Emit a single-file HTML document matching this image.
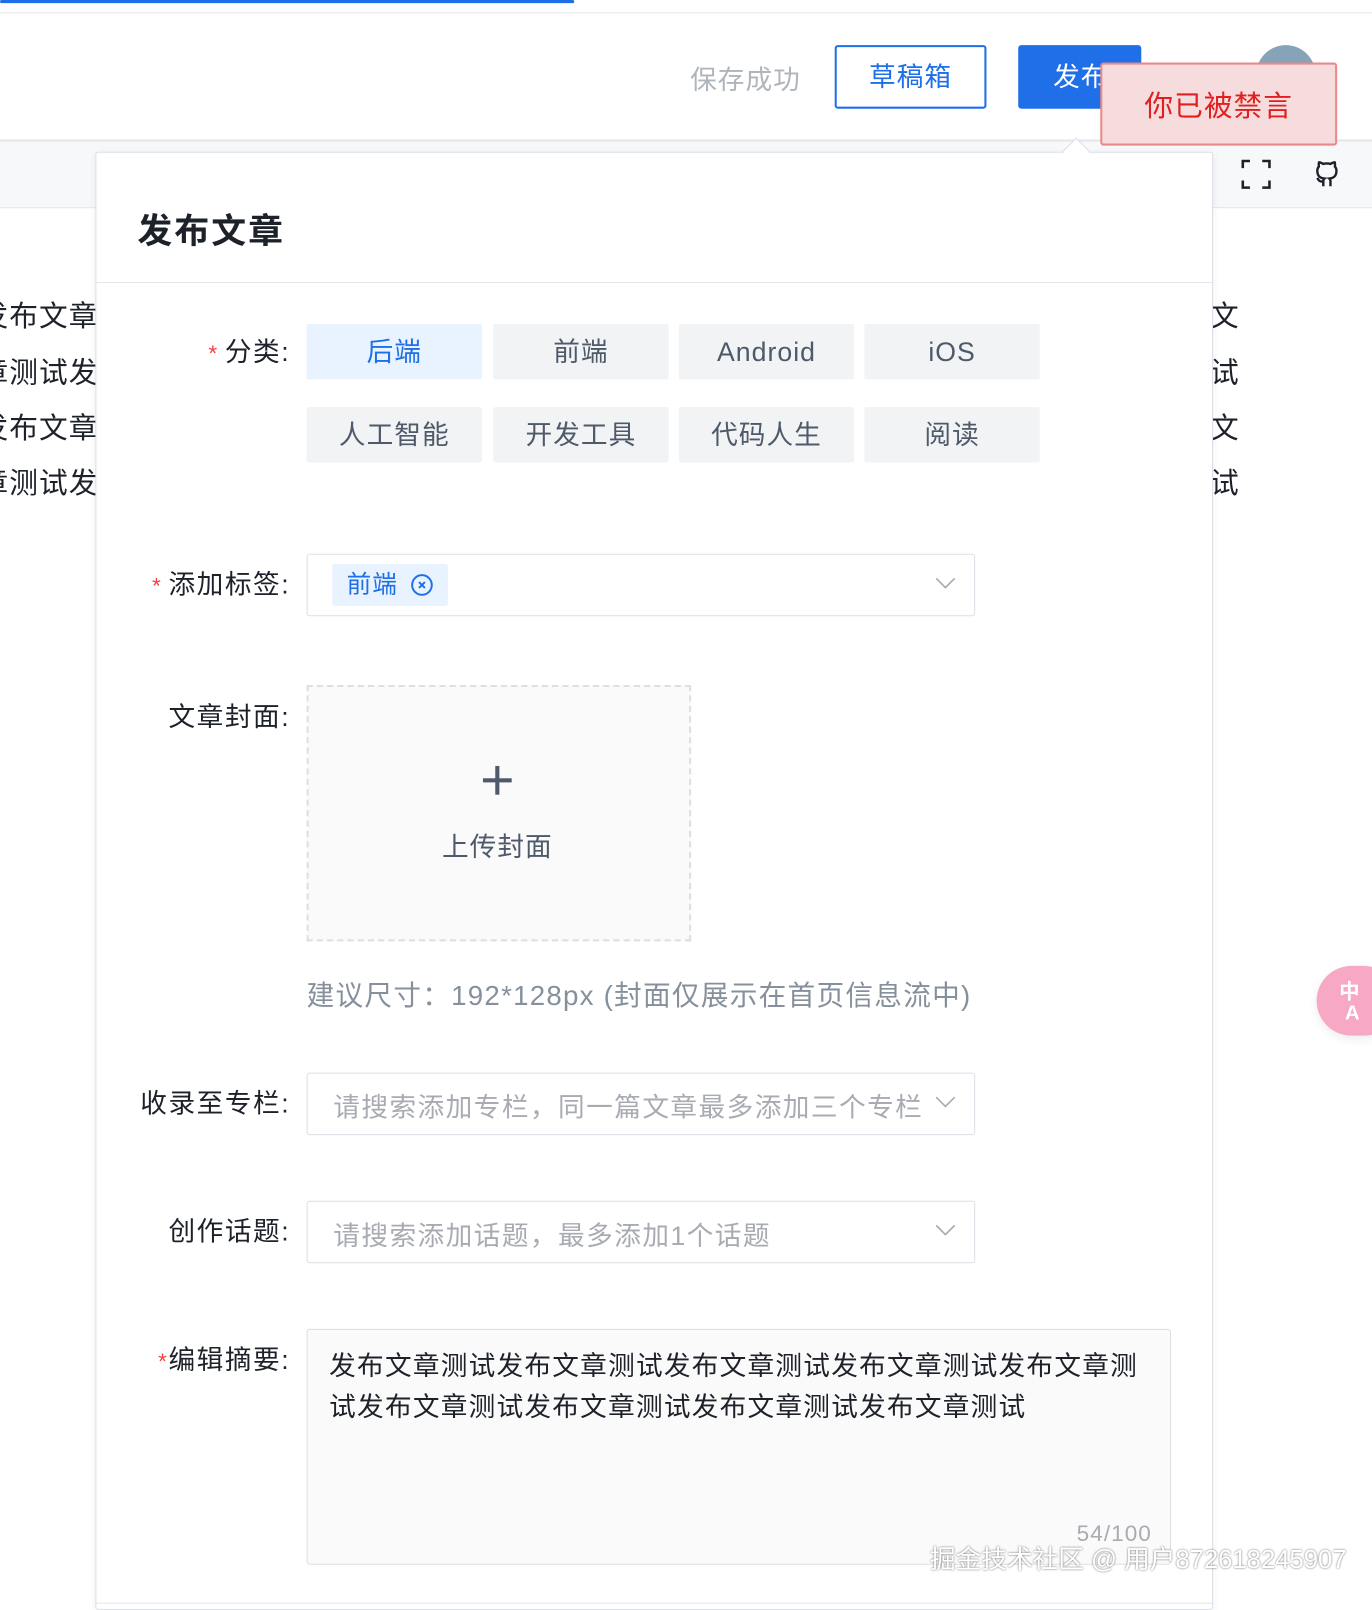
<!DOCTYPE html>
<html><head><meta charset="utf-8"><style>
html,body{margin:0;padding:0;width:1372px;height:1608px;overflow:hidden;background:#fff}
#w{position:absolute;left:0;top:0;width:1338px;height:1568px;transform:scale(1.02541);transform-origin:0 0;font-family:"Liberation Sans","Noto Sans CJK SC",sans-serif;color:#1d2129;letter-spacing:1px}
.a{position:absolute}
.lbl{position:absolute;right:1055px;font-size:26px;color:#1d2129;white-space:nowrap;line-height:30px;letter-spacing:1.5px}
.lbl b{color:#f53f3f;font-weight:normal;font-size:22px;margin-right:6px}
.cat{position:absolute;width:171px;height:54px;background:#f2f3f5;color:#4e5969;font-size:26px;line-height:54px;text-align:center;border-radius:2px}
.sel{position:absolute;left:299px;width:650px;height:59px;border:1px solid #dcdfe6;border-radius:3px;background:#fff}
.ph{position:absolute;left:25px;top:13px;font-size:26px;color:#a8abb2;white-space:nowrap;letter-spacing:1.4px}
.chev{position:absolute;right:18px;top:22px}
.bg{position:absolute;font-size:28px;color:#1d2129;white-space:nowrap}
</style></head><body><div id="w">
<div class="a" style="left:0;top:0;width:560px;height:3px;background:#1e6fe8;border-radius:2px"></div>
<div class="a" style="left:0;top:12px;width:1338px;height:1px;background:#e5e6eb"></div>
<div class="a" style="left:0;top:136px;width:1338px;height:2px;background:#e5e6eb"></div>
<div class="a" style="left:0;top:138px;width:1338px;height:64px;background:#f7f8fa;border-bottom:1px solid #e5e6eb"></div>
<div class="a" style="left:673px;top:58px;font-size:26px;color:#b0b4bb">保存成功</div>
<div class="a" style="left:814px;top:44px;width:144px;height:58px;border:2px solid #1e6fe8;border-radius:3px;color:#1e6fe8;font-size:26px;line-height:58px;text-align:center">草稿箱</div>
<div class="a" style="left:993px;top:44px;width:120px;height:62px;background:#1e6fe8;border-radius:3px;color:#fff;font-size:26px;line-height:62px;padding-left:34px;box-sizing:border-box">发布</div>
<div class="a" style="left:1225px;top:44px;width:58px;height:58px;border-radius:50%;background:#86a3b8"></div>
<svg class="a" style="left:1210px;top:155px" width="30" height="30" viewBox="0 0 30 30" fill="none" stroke="#1d2129" stroke-width="2.5"><path d="M2 9V2h7M21 2h7v7M28 21v7h-7M9 28H2v-7"/></svg>
<svg class="a" style="left:1280px;top:155px" width="28" height="30" viewBox="0 0 24 24" fill="none" stroke="#1d2129" stroke-width="2"><path d="M9 22v-4c-3 .5-4-1-5-3M15 22v-4a3 3 0 0 0-1-2.5c3-.3 6-1.5 6-6.5a5 5 0 0 0-1.3-3.5c.2-.8.2-2-.1-3.5 0 0-1-.3-3.5 1.3a12 12 0 0 0-6.2 0C6.4 1.7 5.4 2 5.4 2c-.3 1.5-.3 2.7-.1 3.5A5 5 0 0 0 4 9c0 5 3 6.2 6 6.5A3 3 0 0 0 9 18"/></svg>
<div class="bg" style="left:-20px;top:287px">发布文章</div>
<div class="bg" style="left:-20px;top:342px">章测试发</div>
<div class="bg" style="left:-20px;top:396px">发布文章</div>
<div class="bg" style="left:-20px;top:450px">章测试发</div>
<div class="bg" style="left:1180px;top:287px">文</div>
<div class="bg" style="left:1180px;top:342px">试</div>
<div class="bg" style="left:1180px;top:396px">文</div>
<div class="bg" style="left:1180px;top:450px">试</div>
<div class="a" style="left:93px;top:148px;width:1088px;height:1420px;background:#fff;border:1px solid #dcdfe6;border-radius:3px;box-shadow:0 2px 8px rgba(0,0,0,.06)"></div>
<div class="a" style="left:1040px;top:138px;width:18px;height:18px;background:#fff;border-left:1px solid #dcdfe6;border-top:1px solid #dcdfe6;transform:rotate(45deg)"></div>
<div class="a" style="left:134px;top:198px;font-size:34px;font-weight:bold;color:#1d2129;letter-spacing:2px">发布文章</div>
<div class="a" style="left:94px;top:275px;width:1088px;height:1px;background:#e5e6eb"></div>
<div class="a" style="left:94px;top:1563px;width:1088px;height:1px;background:#e5e6eb"></div>
<div class="lbl" style="top:328px"><b>*</b>分类:</div>
<div class="cat" style="left:299px;top:316px;background:#e8f3ff;color:#1e6fe8">后端</div>
<div class="cat" style="left:481px;top:316px">前端</div>
<div class="cat" style="left:662px;top:316px">Android</div>
<div class="cat" style="left:843px;top:316px">iOS</div>
<div class="cat" style="left:299px;top:397px">人工智能</div>
<div class="cat" style="left:481px;top:397px">开发工具</div>
<div class="cat" style="left:662px;top:397px">代码人生</div>
<div class="cat" style="left:843px;top:397px">阅读</div>
<div class="lbl" style="top:555px"><b>*</b>添加标签:</div>
<div class="sel" style="top:540px">
<div class="a" style="left:24px;top:9px;width:113px;height:41px;background:#e8f3ff;border-radius:3px;color:#1e6fe8;font-size:24px;line-height:41px;padding-left:14px;box-sizing:border-box">前端<svg style="position:absolute;left:76px;top:9px" width="23" height="23" viewBox="0 0 24 24" fill="none" stroke="#1e6fe8" stroke-width="2"><circle cx="12" cy="12" r="10"/><path d="M9 9l6 6M15 9l-6 6"/></svg></div>
<svg class="chev" width="20" height="12" viewBox="0 0 20 12" fill="none" stroke="#a8abb2" stroke-width="1.6"><path d="M1 1l9 9 9-9"/></svg></div>
<div class="lbl" style="top:684px">文章封面:</div>
<div class="a" style="left:299px;top:668px;width:371px;height:246px;border:2px dashed #dcdfe6;background:#fafafa"></div>
<div class="a" style="left:471px;top:759px;width:28px;height:4px;background:#4e5969"></div>
<div class="a" style="left:483px;top:747px;width:4px;height:28px;background:#4e5969"></div>
<div class="a" style="left:431px;top:806px;font-size:26px;color:#4e5969">上传封面</div>
<div class="a" style="left:299px;top:949px;font-size:27px;color:#86909c;letter-spacing:1.2px;white-space:nowrap">建议尺寸：192*128px (封面仅展示在首页信息流中)</div>
<div class="lbl" style="top:1061px">收录至专栏:</div>
<div class="sel" style="top:1046px"><div class="ph">请搜索添加专栏，同一篇文章最多添加三个专栏</div><svg class="chev" width="20" height="12" viewBox="0 0 20 12" fill="none" stroke="#a8abb2" stroke-width="1.6"><path d="M1 1l9 9 9-9"/></svg></div>
<div class="lbl" style="top:1186px">创作话题:</div>
<div class="sel" style="top:1171px"><div class="ph">请搜索添加话题，最多添加1个话题</div><svg class="chev" width="20" height="12" viewBox="0 0 20 12" fill="none" stroke="#a8abb2" stroke-width="1.6"><path d="M1 1l9 9 9-9"/></svg></div>
<div class="lbl" style="top:1311px"><b style="margin-right:0">*</b>编辑摘要:</div>
<div class="a" style="left:299px;top:1296px;width:841px;height:228px;border:1px solid #dcdfe6;border-radius:3px;background:#fafafa"></div>
<div class="a" style="left:321px;top:1312px;width:800px;font-size:26px;line-height:40px;color:#1d2129;letter-spacing:1.2px;word-break:break-all">发布文章测试发布文章测试发布文章测试发布文章测试发布文章测试发布文章测试发布文章测试发布文章测试发布文章测试</div>
<div class="a" style="left:1050px;top:1483px;font-size:22px;color:#a8abb2">54/100</div>
<div class="a" style="left:907px;top:1501px;font-size:25px;color:#fff;text-shadow:0 0 2px rgba(0,0,0,.6);white-space:nowrap;letter-spacing:0">掘金技术社区 @ 用户872618245907</div>
<div class="a" style="left:1073px;top:61px;width:231px;height:81px;background:#f6dcdc;border:2px solid #e88a8a;border-radius:3px;color:#e02020;font-size:28px;line-height:81px;text-align:center;box-sizing:border-box">你已被禁言</div>
<div class="a" style="left:1284px;top:942px;width:80px;height:68px;border-radius:34px;background:#f7a8c4;box-shadow:0 3px 10px rgba(0,0,0,.08)"></div>
<div class="a" style="left:1306px;top:958px;font-size:20px;line-height:20px;font-weight:bold;color:#fff;letter-spacing:0">中<br>&nbsp;A</div>
</div></body></html>
